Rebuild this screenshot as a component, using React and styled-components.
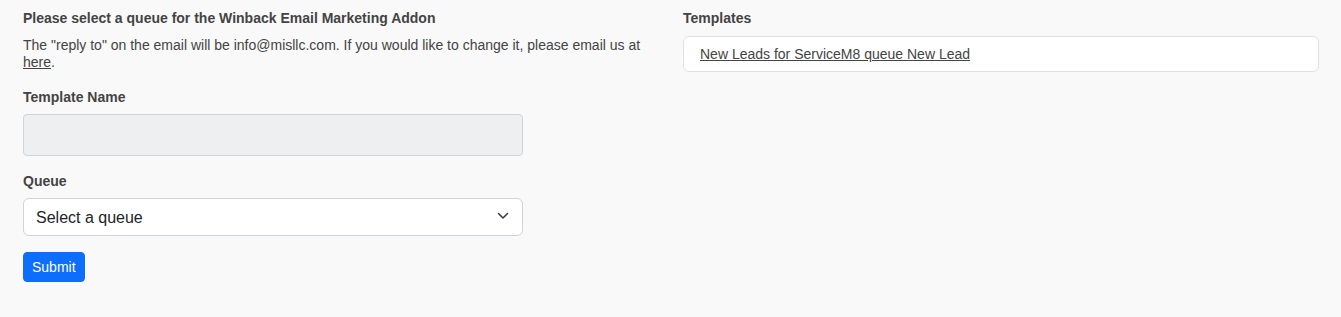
import React from 'react';
import styled, { createGlobalStyle } from 'styled-components';

const GlobalStyle = createGlobalStyle`
  html, body {
    margin: 0;
    padding: 0;
    background: #f9f9f9;
    font-family: "Liberation Sans", Arial, sans-serif;
    color: #444;
  }
`;

const Page = styled.div`
  display: grid;
  grid-template-columns: 636px 636px;
  column-gap: 24px;
  padding: 10px 22px 0 23px;
  min-height: 317px;
  box-sizing: border-box;
  align-items: start;
`;

const Column = styled.div`
  display: flex;
  flex-direction: column;
  align-items: flex-start;
`;

const Heading = styled.div`
  font-size: 14px;
  font-weight: bold;
  line-height: 17px;
  color: #444;
  margin-top: ${p => p.$top || 0}px;
`;

const Note = styled.p`
  margin: 10px 0 0;
  font-size: 14px;
  line-height: 17px;
  color: #444;
  a {
    color: #444;
    text-decoration: underline;
  }
`;

const TextInput = styled.input`
  margin-top: 8px;
  width: 500px;
  height: 42px;
  box-sizing: border-box;
  border: 1px solid #ced4da;
  border-radius: 4px;
  background: #eeeff1;
  padding: 6px 12px;
  font-size: 16px;
  font-family: inherit;
`;

const SelectWrap = styled.div`
  position: relative;
  margin-top: 8px;
  width: 500px;
`;

const Select = styled.select`
  appearance: none;
  width: 100%;
  height: 38px;
  box-sizing: border-box;
  border: 1px solid #ced4da;
  border-radius: 6px;
  background: #fff;
  padding: 0 36px 0 12px;
  font-size: 16px;
  font-family: "Liberation Sans", Arial, sans-serif;
  color: #212529;
`;

const Chevron = styled.svg`
  position: absolute;
  right: 14px;
  top: 14px;
  pointer-events: none;
`;

const Button = styled.button`
  margin-top: 16px;
  height: 30px;
  padding: 0 8px;
  border: 1px solid #0d6efd;
  border-radius: 4px;
  background: #0d6efd;
  color: #fff;
  font-size: 14px;
  font-family: "Liberation Sans", Arial, sans-serif;
`;

const TemplateCard = styled.div`
  margin-top: 9px;
  width: 100%;
  box-sizing: border-box;
  height: 36px;
  display: flex;
  align-items: center;
  padding: 0 16px;
  border: 1px solid #dfe1e4;
  border-radius: 6px;
  background: #fff;
  a {
    font-size: 14px;
    color: #444;
    text-decoration: underline;
  }
`;

export default function App() {
  return (
    <>
      <GlobalStyle />
      <Page>
        <Column>
          <Heading>Please select a queue for the Winback Email Marketing Addon</Heading>
          <Note>
            The "reply to" on the email will be info@misllc.com. If you would like to change it, please email us at{' '}
            <a href="#">here</a>.
          </Note>
          <Heading $top={18}>Template Name</Heading>
          <TextInput disabled />
          <Heading $top={17}>Queue</Heading>
          <SelectWrap>
            <Select defaultValue="">
              <option value="">Select a queue</option>
            </Select>
            <Chevron width="12" height="8" viewBox="0 0 12 8">
              <path d="M1.5 1.5l4.5 4.5 4.5-4.5" fill="none" stroke="#343a40" strokeWidth="1.5" strokeLinecap="round" strokeLinejoin="round" />
            </Chevron>
          </SelectWrap>
          <Button>Submit</Button>
        </Column>
        <Column>
          <Heading>Templates</Heading>
          <TemplateCard>
            <a href="#">New Leads for ServiceM8 queue New Lead</a>
          </TemplateCard>
        </Column>
      </Page>
    </>
  );
}
